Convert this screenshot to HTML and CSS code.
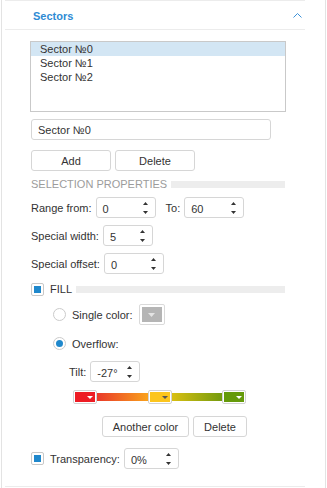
FILE: index.html
```html
<!DOCTYPE html>
<html lang="en">
<head>
  <meta charset="UTF-8">
  <title>Sectors</title>
  <link rel="stylesheet" href="styles.css">
</head>
<body>

  <div class="frame">
    <div class="panel">

      <div class="panel-head">
        <span class="panel-title">Sectors</span>
        <svg class="chevron" width="9" height="5" viewBox="0 0 9 5"><polyline points="0.5,4.5 4.5,0.5 8.5,4.5" fill="none" stroke="#3d92d8" stroke-width="1"/></svg>
      </div>

      <div class="panel-body">
        <div class="listbox">
          <div class="list-item selected">Sector №0</div>
          <div class="list-item">Sector №1</div>
          <div class="list-item">Sector №2</div>
        </div>

        <input class="text-field" type="text" value="Sector №0">

        <div class="btn-row">
          <button class="btn w80">Add</button>
          <button class="btn w80">Delete</button>
        </div>

        <div class="section-title">
          <span>SELECTION PROPERTIES</span>
          <span class="rule"></span>
        </div>

        <div class="field-row row-range">
          <span class="label">Range from:</span>
          <div class="spin w60"><span class="val">0</span><svg class="arrows" width="5" height="12" viewBox="0 0 5 12"><polygon points="0,3 2.5,0 5,3"/><polygon points="0,9 2.5,12 5,9"/></svg></div>
          <span class="label to-label">To:</span>
          <div class="spin w60"><span class="val">60</span><svg class="arrows" width="5" height="12" viewBox="0 0 5 12"><polygon points="0,3 2.5,0 5,3"/><polygon points="0,9 2.5,12 5,9"/></svg></div>
        </div>

        <div class="field-row">
          <span class="label">Special width:</span>
          <div class="spin w50"><span class="val">5</span><svg class="arrows" width="5" height="12" viewBox="0 0 5 12"><polygon points="0,3 2.5,0 5,3"/><polygon points="0,9 2.5,12 5,9"/></svg></div>
        </div>

        <div class="field-row">
          <span class="label">Special offset:</span>
          <div class="spin w60"><span class="val">0</span><svg class="arrows" width="5" height="12" viewBox="0 0 5 12"><polygon points="0,3 2.5,0 5,3"/><polygon points="0,9 2.5,12 5,9"/></svg></div>
        </div>

        <div class="fill-row">
          <span class="check"></span>
          <span class="fill-label">FILL</span>
          <span class="rule"></span>
        </div>

        <div class="option-row row-single">
          <span class="radio"></span>
          <span class="label">Single color:</span>
          <div class="swatch"><div class="swatch-color"><svg width="7" height="4" viewBox="0 0 7 4"><polygon points="0,0 7,0 3.5,4" fill="#e4e4e4"/></svg></div></div>
        </div>

        <div class="option-row">
          <span class="radio checked"></span>
          <span class="label">Overflow:</span>
        </div>

        <div class="tilt-row">
          <span class="label">Tilt:</span>
          <div class="spin w50"><span class="val">-27°</span><svg class="arrows" width="5" height="12" viewBox="0 0 5 12"><polygon points="0,3 2.5,0 5,3"/><polygon points="0,9 2.5,12 5,9"/></svg></div>
        </div>

        <div class="gradient">
          <div class="stop"><div class="stop-color red"><svg width="6" height="3" viewBox="0 0 6 3"><polygon points="0,0 6,0 3,3" fill="#fff"/></svg></div></div>
          <div class="segment seg-1"></div>
          <div class="stop"><div class="stop-color yellow"><svg width="6" height="3" viewBox="0 0 6 3"><polygon points="0,0 6,0 3,3" fill="#555"/></svg></div></div>
          <div class="segment seg-2"></div>
          <div class="stop"><div class="stop-color green"><svg width="6" height="3" viewBox="0 0 6 3"><polygon points="0,0 6,0 3,3" fill="#fff"/></svg></div></div>
        </div>

        <div class="color-buttons">
          <button class="btn w87">Another color</button>
          <button class="btn w54">Delete</button>
        </div>

        <div class="field-row row-transparency">
          <span class="check"></span>
          <span class="label check-label">Transparency:</span>
          <div class="spin w55"><span class="val">0%</span><svg class="arrows" width="5" height="12" viewBox="0 0 5 12"><polygon points="0,3 2.5,0 5,3"/><polygon points="0,9 2.5,12 5,9"/></svg></div>
        </div>
      </div>

    </div>
  </div>

</body>
</html>
```

FILE: styles.css
```css
body {
  margin: 0;
  font-family: "Liberation Sans", Arial, sans-serif;
  font-size: 11px;
  color: #333;
  background: #fff;
}
.frame {
  width: 325px;
  height: 488px;
  margin-left: 1px;
  padding-left: 3px;
  box-sizing: border-box;
  border-left: 1px solid #e3e3e3;
  border-right: 1px solid #e3e3e3;
}
.panel {
  width: 300px;
  height: 487px;
  box-sizing: border-box;
  border-top: 1px solid #ececec;
  border-bottom: 1px solid #ececec;
}
.panel-head {
  height: 29px;
  box-sizing: border-box;
  padding: 1px 3px 0 28px;
  border-bottom: 1px solid #ececec;
  display: flex;
  align-items: center;
  justify-content: space-between;
}
.panel-title {
  font-weight: bold;
  color: #2f8bd4;
}
.chevron {
  display: block;
}
.panel-body {
  padding: 11px 20px 0 26px;
}
.listbox {
  margin-left: -1px;
  width: 256px;
  height: 71px;
  box-sizing: border-box;
  border: 1px solid #c9c9c9;
}
.list-item {
  height: 14px;
  line-height: 14px;
  padding-left: 9px;
}
.list-item.selected {
  background: #d3e6f4;
}
.text-field {
  display: block;
  margin-top: 7px;
  width: 240px;
  height: 21px;
  box-sizing: border-box;
  padding: 1px 6px 0;
  border: 1px solid #d6d6d6;
  border-radius: 3px;
  font: inherit;
  color: #333;
  outline: none;
}
.btn-row {
  display: flex;
  gap: 4px;
  margin-top: 10px;
}
.btn {
  height: 21px;
  box-sizing: border-box;
  padding: 0;
  border: 1px solid #d6d6d6;
  border-radius: 3px;
  background: #fff;
  font: inherit;
  color: #333;
}
.w80 { width: 80px; }
.w87 { width: 87px; }
.w54 { width: 54px; }
.section-title {
  display: flex;
  align-items: center;
  height: 14px;
  margin-top: 6px;
  color: #9c9c9c;
}
.rule {
  flex: 1;
  height: 7px;
  margin-left: 4px;
  background: #ededed;
}
.field-row {
  display: flex;
  align-items: center;
  height: 21px;
  margin-top: 7px;
}
.row-range {
  margin-top: 6px;
}
.label {
  margin-right: 4px;
}
.to-label {
  margin-left: 10px;
}
.spin {
  display: flex;
  align-items: center;
  justify-content: space-between;
  height: 21px;
  box-sizing: border-box;
  padding: 0 7px 0 6px;
  border: 1px solid #d6d6d6;
  border-radius: 3px;
}
.spin .val {
  line-height: 13px;
  padding-top: 4px;
}
.arrows {
  display: block;
  fill: #333;
}
.w50 { width: 50px; }
.w55 { width: 55px; }
.w60 { width: 60px; }
.fill-row {
  display: flex;
  align-items: center;
  height: 14px;
  margin-top: 8px;
}
.check {
  width: 13px;
  height: 13px;
  box-sizing: border-box;
  border: 1px solid #c8c8c8;
  border-radius: 2px;
  display: flex;
  align-items: center;
  justify-content: center;
  margin-right: 6px;
}
.check::after {
  content: "";
  width: 7px;
  height: 7px;
  background: #1f88cc;
}
.fill-label {
  color: #333;
}
.option-row {
  display: flex;
  align-items: center;
  height: 21px;
  margin-top: 8px;
  margin-left: 22px;
}
.radio {
  width: 13px;
  height: 13px;
  box-sizing: border-box;
  border: 1px solid #cbcbcb;
  border-radius: 50%;
  margin-right: 6px;
  display: flex;
  align-items: center;
  justify-content: center;
}
.radio.checked::after {
  content: "";
  width: 7px;
  height: 7px;
  border-radius: 50%;
  background: #1f88cc;
}
.row-single .label {
  margin-right: 6px;
}
.swatch {
  width: 26px;
  height: 21px;
  box-sizing: border-box;
  padding: 2px;
  border: 1px solid #dadada;
  border-radius: 2px;
}
.swatch-color {
  height: 100%;
  background: #b5b5b5;
  display: flex;
  align-items: center;
  justify-content: center;
}
.swatch-color svg {
  display: block;
}
.tilt-row {
  display: flex;
  align-items: center;
  height: 21px;
  margin-top: 7px;
  margin-left: 38px;
}
.gradient {
  display: flex;
  align-items: center;
  width: 173px;
  height: 14px;
  margin-top: 8px;
  margin-left: 42px;
}
.stop {
  width: 24px;
  height: 14px;
  box-sizing: border-box;
  padding: 1px;
  border: 1px solid #d2d2d2;
  border-radius: 2px;
  background: #fff;
}
.stop-color {
  height: 100%;
  display: flex;
  align-items: center;
  justify-content: flex-end;
  padding-right: 2px;
}
.stop-color svg {
  display: block;
}
.red { background: #ed1c24; }
.yellow { background: #fcc51d; }
.green { background: #659a0a; }
.segment {
  flex: 1;
  height: 8px;
}
.seg-1 {
  background: linear-gradient(to right, #e9392a, #f9a21c);
}
.seg-2 {
  background: linear-gradient(to right, #d9bf12, #749b0e);
}
.color-buttons {
  display: flex;
  justify-content: flex-end;
  gap: 4px;
  width: 174px;
  margin-top: 12px;
  margin-left: 42px;
}
.row-transparency {
  margin-top: 11px;
}
```
